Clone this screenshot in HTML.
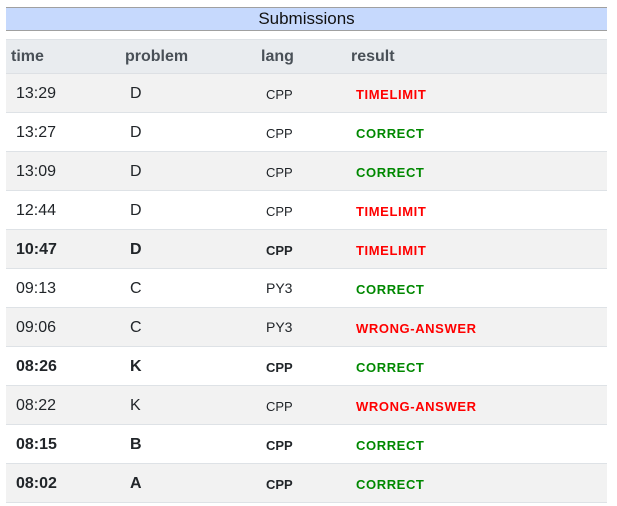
<!DOCTYPE html>
<html><head><style>
body{margin:0;background:#fff;font-family:"Liberation Sans",Arial,sans-serif;color:#212529;}
.t{position:absolute;left:6px;top:7px;width:601px;height:22px;background:#c6d9fd;border-top:1px solid #a0a0a0;border-bottom:1px solid #a0a0a0;text-align:center;font-size:17px;line-height:22px;color:#111;}
.h{position:absolute;left:6px;top:39px;width:601px;height:33px;background:#e9ecef;border-top:1px solid #dee2e6;border-bottom:2px solid #dde0e4;font-weight:bold;font-size:16px;color:#495057;}
.h span,.r span{position:absolute;}
.r{position:absolute;left:6px;width:601px;height:38px;border-bottom:1px solid #dee2e6;font-size:16px;}
.r.g{background:#f2f2f2}
.r span{top:11px}
.l{font-size:13px;top:13px!important}
.res{font-size:13px;font-weight:bold;letter-spacing:.6px;top:13px!important}
.red{color:#f00}.grn{color:#080}
.b{font-weight:bold}
</style></head><body>
<div class="t">Submissions</div>
<div class="h"><span style="left:5px;top:8px">time</span><span style="left:119px;top:8px">problem</span><span style="left:255px;top:8px">lang</span><span style="left:345px;top:8px">result</span></div>
<div class="r g" style="top:74px"><span style="left:10px">13:29</span><span style="left:124px">D</span><span class="l" style="left:260px">CPP</span><span class="res red" style="left:350px">TIMELIMIT</span></div>
<div class="r" style="top:113px"><span style="left:10px">13:27</span><span style="left:124px">D</span><span class="l" style="left:260px">CPP</span><span class="res grn" style="left:350px">CORRECT</span></div>
<div class="r g" style="top:152px"><span style="left:10px">13:09</span><span style="left:124px">D</span><span class="l" style="left:260px">CPP</span><span class="res grn" style="left:350px">CORRECT</span></div>
<div class="r" style="top:191px"><span style="left:10px">12:44</span><span style="left:124px">D</span><span class="l" style="left:260px">CPP</span><span class="res red" style="left:350px">TIMELIMIT</span></div>
<div class="r g b" style="top:230px"><span style="left:10px">10:47</span><span style="left:124px">D</span><span class="l" style="left:260px">CPP</span><span class="res red" style="left:350px">TIMELIMIT</span></div>
<div class="r" style="top:269px"><span style="left:10px">09:13</span><span style="left:124px">C</span><span class="l" style="left:260px;font-size:14px;top:11px!important">PY3</span><span class="res grn" style="left:350px">CORRECT</span></div>
<div class="r g" style="top:308px"><span style="left:10px">09:06</span><span style="left:124px">C</span><span class="l" style="left:260px;font-size:14px;top:11px!important">PY3</span><span class="res red" style="left:350px">WRONG-ANSWER</span></div>
<div class="r b" style="top:347px"><span style="left:10px">08:26</span><span style="left:124px">K</span><span class="l" style="left:260px">CPP</span><span class="res grn" style="left:350px">CORRECT</span></div>
<div class="r g" style="top:386px"><span style="left:10px">08:22</span><span style="left:124px">K</span><span class="l" style="left:260px">CPP</span><span class="res red" style="left:350px">WRONG-ANSWER</span></div>
<div class="r b" style="top:425px"><span style="left:10px">08:15</span><span style="left:124px">B</span><span class="l" style="left:260px">CPP</span><span class="res grn" style="left:350px">CORRECT</span></div>
<div class="r g b" style="top:464px"><span style="left:10px">08:02</span><span style="left:124px">A</span><span class="l" style="left:260px">CPP</span><span class="res grn" style="left:350px">CORRECT</span></div>
</body></html>
